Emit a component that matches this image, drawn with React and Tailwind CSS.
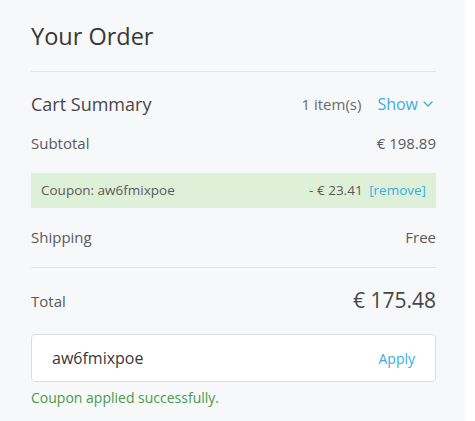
import React, { useState } from 'react';
import { ChevronDown } from 'lucide-react';

function Row({ label, value, className = '' }) {
  return (
    <div className={`flex items-center justify-between ${className}`}>
      <span>{label}</span>
      <span>{value}</span>
    </div>
  );
}

export default function App() {
  const [code, setCode] = useState('aw6fmixpoe');

  return (
    <div className="w-[475px] h-[421px] bg-white" style={{ fontFamily: '"Open Sans", "Noto Sans", sans-serif' }}>
      <div className="w-[465px] h-full bg-[#f7f8fa] pl-[31px] pr-[29px] pt-[20px]">
        <h2 className="text-[23.5px] leading-[32px] text-[#383838]">Your Order</h2>
        <div className="mt-[19px] border-t border-[#e1e3e6]" />

        <div className="mt-[19px] flex items-center justify-between h-[26px]">
          <span className="text-[18px] text-[#474747]">Cart Summary</span>
          <div className="flex items-center text-[15px]">
            <span className="text-[#6a6a6a]">1 item(s)</span>
            <button className="ml-[16px] flex items-center text-[#3aade3] text-[16px]">
              Show
              <ChevronDown size={16} strokeWidth={2} className="ml-[2px]" />
            </button>
          </div>
        </div>

        <Row label="Subtotal" value="€ 198.89" className="mt-[14px] h-[24px] text-[15px] text-[#5a5a5a]" />

        <div className="mt-[18px] h-[35px] bg-[#dff0d8] flex items-center justify-between pl-[10px] pr-[10px] text-[13.5px] text-[#5a5a5a]">
          <span>Coupon: aw6fmixpoe</span>
          <span>
            - € 23.41 <span className="ml-[3px] text-[#3aade3]">[remove]</span>
          </span>
        </div>

        <Row label="Shipping" value="Free" className="mt-[17px] h-[24px] text-[15px] text-[#5a5a5a]" />
        <div className="mt-[18px] border-t border-[#e1e3e6]" />

        <div className="mt-[19px] flex items-center justify-between h-[28px]">
          <span className="text-[15px] text-[#5a5a5a]">Total</span>
          <span className="text-[21px] text-[#474747]">€ 175.48</span>
        </div>

        <div className="mt-[19px] h-[48px] bg-white border border-[#dcdfe3] rounded-[4px] flex items-center pl-[20px] pr-[20px]">
          <input
            value={code}
            onChange={(e) => setCode(e.target.value)}
            className="flex-1 min-w-0 bg-transparent outline-none text-[16px] text-[#383838]"
          />
          <button className="text-[14px] text-[#3aade3]">Apply</button>
        </div>
        <p className="mt-[5px] text-[14px] text-[#4a9a4a]">Coupon applied successfully.</p>
      </div>
    </div>
  );
}
